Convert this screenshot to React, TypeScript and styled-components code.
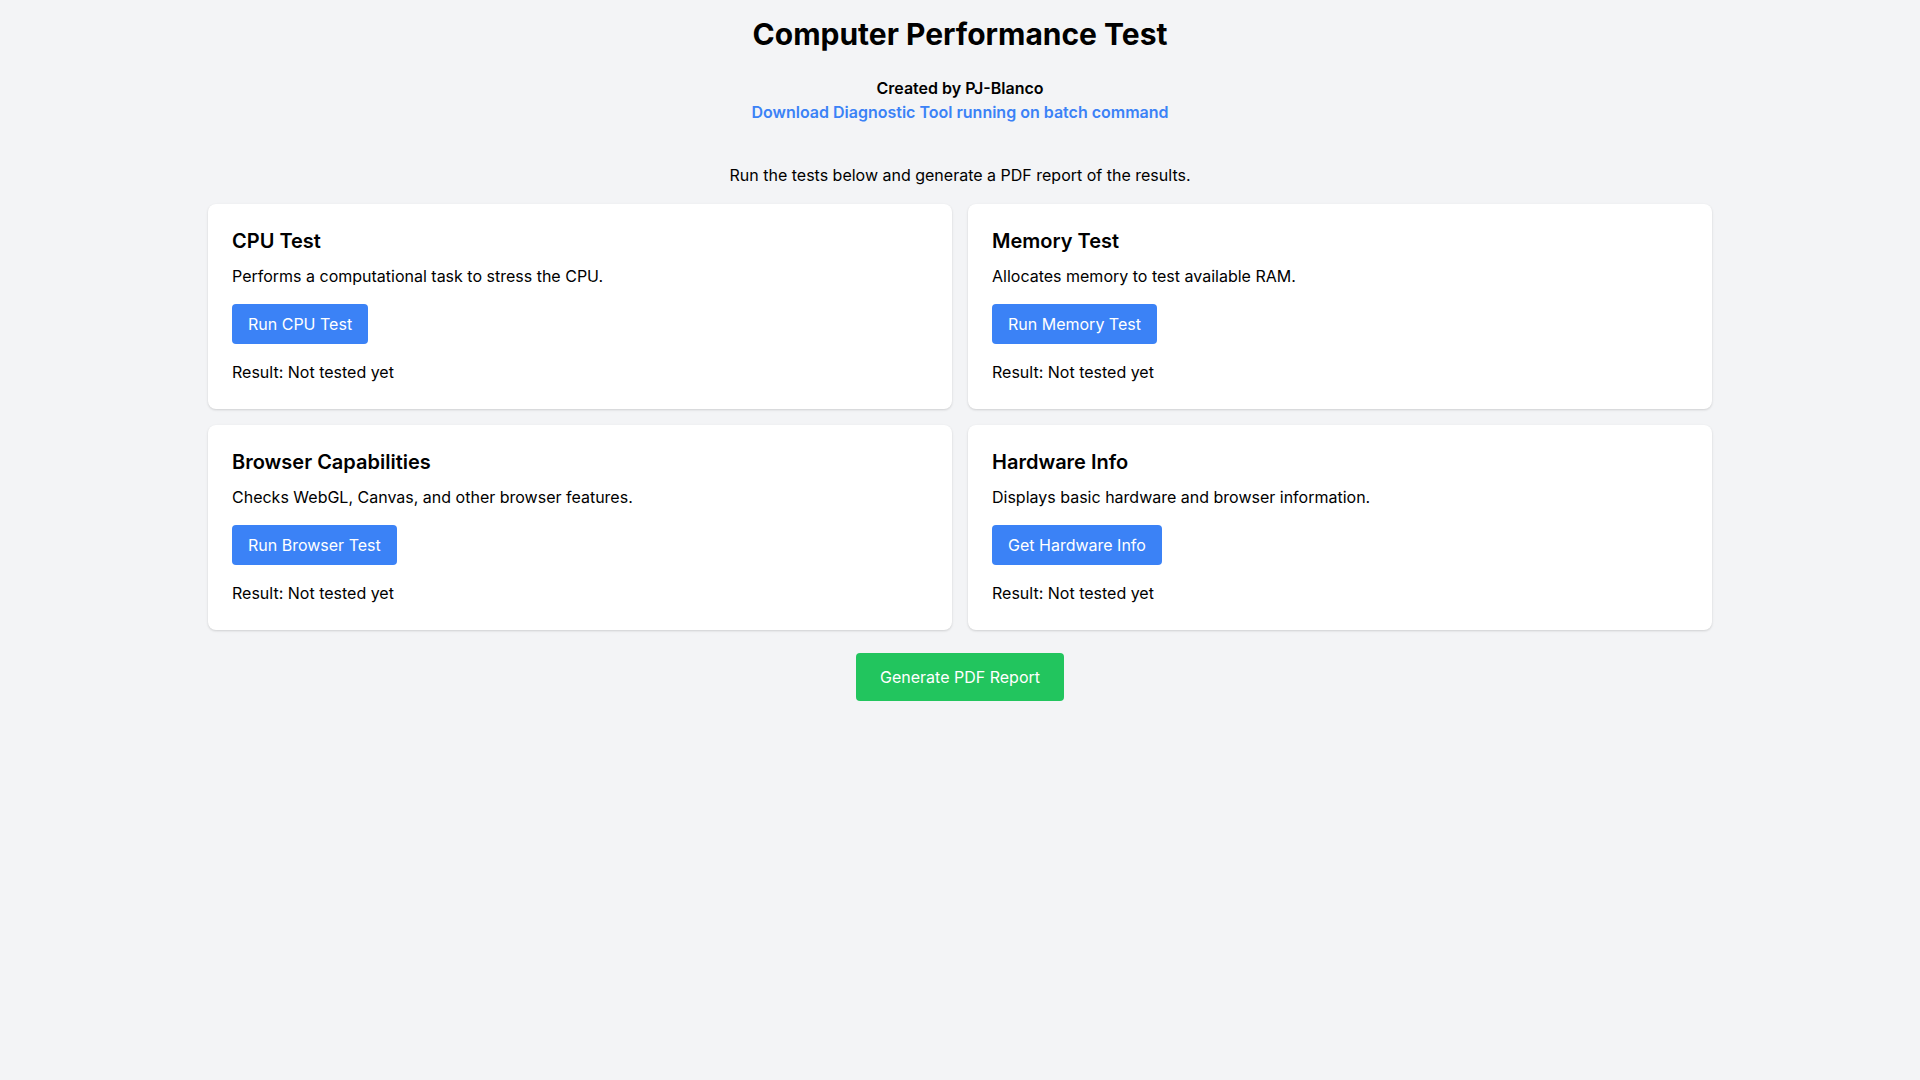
import React from 'react';
import styled, { createGlobalStyle } from 'styled-components';

const GlobalStyle = createGlobalStyle`
  * { box-sizing: border-box; }
  body {
    margin: 0;
    background: #f3f4f6;
    font-family: Inter, "Noto Sans", sans-serif;
    color: #000;
  }
`;

const Page = styled.div`
  max-width: 1536px;
  margin: 0 auto;
  padding: 16px;
  text-align: center;
`;

const Title = styled.h1`
  font-size: 30px;
  line-height: 36px;
  font-weight: 700;
  margin: 0 0 24px;
`;

const Credit = styled.p`
  margin: 0;
  font-size: 16px;
  line-height: 24px;
  font-weight: 600;
`;

const DownloadLink = styled.a`
  display: block;
  color: #3b82f6;
  font-weight: 600;
  font-size: 16px;
  line-height: 24px;
  text-decoration: none;
  margin-bottom: 39px;
`;

const Intro = styled.p`
  margin: 0 0 17px;
  font-size: 16px;
  line-height: 24px;
`;

const Grid = styled.div`
  display: grid;
  grid-template-columns: 1fr 1fr;
  gap: 16px;
  text-align: left;
`;

const Card = styled.div`
  background: #fff;
  border-radius: 8px;
  padding: 23px 24px 25px;
  box-shadow: 0 1px 3px rgba(0, 0, 0, 0.1), 0 1px 2px rgba(0, 0, 0, 0.06);
`;

const CardTitle = styled.h2`
  margin: 0 0 9px;
  font-size: 20px;
  line-height: 28px;
  font-weight: 600;
`;

const CardText = styled.p`
  margin: 0 0 16px;
  font-size: 16px;
  line-height: 24px;
`;

const Button = styled.button<{ $green?: boolean }>`
  font-family: inherit;
  font-size: 16px;
  line-height: 24px;
  color: #fff;
  border: none;
  border-radius: 4px;
  cursor: pointer;
  background: ${p => (p.$green ? '#22c55e' : '#3b82f6')};
  padding: ${p => (p.$green ? '12px 24px' : '8px 16px')};
  margin: ${p => (p.$green ? '23px 0 0' : '0 0 16px')};
`;

const Result = styled.p`
  margin: 0;
  font-size: 16px;
  line-height: 24px;
`;

const tests = [
  { title: 'CPU Test', text: 'Performs a computational task to stress the CPU.', button: 'Run CPU Test' },
  { title: 'Memory Test', text: 'Allocates memory to test available RAM.', button: 'Run Memory Test' },
  { title: 'Browser Capabilities', text: 'Checks WebGL, Canvas, and other browser features.', button: 'Run Browser Test' },
  { title: 'Hardware Info', text: 'Displays basic hardware and browser information.', button: 'Get Hardware Info' },
];

export default function App() {
  return (
    <Page>
      <GlobalStyle />
      <Title>Computer Performance Test</Title>
      <Credit>Created by PJ-Blanco</Credit>
      <DownloadLink href="#">Download Diagnostic Tool running on batch command</DownloadLink>
      <Intro>Run the tests below and generate a PDF report of the results.</Intro>
      <Grid>
        {tests.map(t => (
          <Card key={t.title}>
            <CardTitle>{t.title}</CardTitle>
            <CardText>{t.text}</CardText>
            <Button>{t.button}</Button>
            <Result>Result: Not tested yet</Result>
          </Card>
        ))}
      </Grid>
      <Button $green>Generate PDF Report</Button>
    </Page>
  );
}
